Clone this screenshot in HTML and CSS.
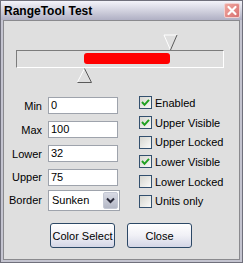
FILE: index.html
```html
<!DOCTYPE html>
<html>
<head>
<meta charset="utf-8">
<link rel="stylesheet" href="styles.css">
</head>
<body>
<div class="window">
  <div class="titlebar">
    <span class="title">RangeTool Test</span>
    <span class="close-x">
      <svg width="16" height="15" viewBox="0 0 16 15"><path d="M4.5 4 L11.5 11 M11.5 4 L4.5 11" stroke="#fff" stroke-width="2.2" stroke-linecap="round"/></svg>
    </span>
  </div>
  <div class="client">
    <div class="slider">
      <div class="track">
        <div class="range" style="left:67px;width:86px"></div>
        <svg class="thumb thumb-upper" width="15" height="17" viewBox="0 0 15 17">
          <polyline points="14,1 1,1 7.5,16" fill="none" stroke="#ffffff" stroke-width="1"/>
          <polyline points="14,1 7.5,16" fill="none" stroke="#5a5a5a" stroke-width="1"/>
        </svg>
        <svg class="thumb thumb-lower" width="15" height="15" viewBox="0 0 15 15">
          <polyline points="7.5,0.5 0.5,14" fill="none" stroke="#ffffff" stroke-width="1"/>
          <polyline points="7.5,0.5 14.5,14.5 0.5,14.5" fill="none" stroke="#5a5a5a" stroke-width="1"/>
        </svg>
      </div>
    </div>
    <div class="form">
      <div class="fields">
        <label class="lbl">Min</label><div class="input">0</div>
        <label class="lbl">Max</label><div class="input">100</div>
        <label class="lbl">Lower</label><div class="input">32</div>
        <label class="lbl">Upper</label><div class="input">75</div>
        <label class="lbl lbl-sel">Border</label>
        <div class="select">
          <span class="sel-val">Sunken</span>
          <span class="sel-drop"><svg width="9" height="7" viewBox="0 0 9 7"><path d="M1 1.5 L4.5 5 L8 1.5" fill="none" stroke="#2a2a3a" stroke-width="2"/></svg></span>
        </div>
      </div>
      <div class="checks">
        <div class="chk"><span class="box on"><svg width="11" height="11" viewBox="0 0 11 11"><path d="M2 5 L4.5 7.8 L9 2.8" fill="none" stroke="#21a121" stroke-width="2"/></svg></span>Enabled</div>
        <div class="chk"><span class="box on"><svg width="11" height="11" viewBox="0 0 11 11"><path d="M2 5 L4.5 7.8 L9 2.8" fill="none" stroke="#21a121" stroke-width="2"/></svg></span>Upper Visible</div>
        <div class="chk"><span class="box"></span>Upper Locked</div>
        <div class="chk"><span class="box on"><svg width="11" height="11" viewBox="0 0 11 11"><path d="M2 5 L4.5 7.8 L9 2.8" fill="none" stroke="#21a121" stroke-width="2"/></svg></span>Lower Visible</div>
        <div class="chk"><span class="box"></span>Lower Locked</div>
        <div class="chk"><span class="box"></span>Units only</div>
      </div>
    </div>
    <div class="buttons">
      <button class="btn">Color Select</button>
      <button class="btn">Close</button>
    </div>
  </div>
</div>
</body>
</html>
```

FILE: styles.css
```css
html, body {
  margin: 0;
  padding: 0;
  background: #ffffff;
}
body {
  font-family: "Liberation Sans", Arial, sans-serif;
  font-size: 11px;
  color: #000;
}
.window {
  width: 243px;
  height: 263px;
  box-sizing: border-box;
  border: 1px solid #70707c;
  background: #c4c4d0;
  display: flex;
  flex-direction: column;
}
.titlebar {
  height: 19px;
  flex: none;
  display: flex;
  align-items: center;
  padding-left: 3px;
  background: linear-gradient(#f4f4fa 0%, #d6d6e2 45%, #b0b0c4 100%);
}
.title {
  font-weight: bold;
  font-size: 12px;
}
.close-x {
  margin-left: auto;
  margin-right: 2px;
  width: 16px;
  height: 15px;
  box-sizing: border-box;
  border: 1px solid #f2d0d0;
  border-radius: 2px;
  background: linear-gradient(135deg, #f0a8a0, #d87070);
  display: flex;
}
.close-x svg { margin: -1px; }
.client {
  flex: 1;
  margin: 0 2px 2px 2px;
  border: 1px solid #8a8a8e;
  background: #dfdfdf;
  display: flex;
  flex-direction: column;
}
.slider {
  padding: 29px 15px 0 12px;
  height: 43px;
  flex: none;
}
.track {
  position: relative;
  height: 18px;
  box-sizing: border-box;
  border-top: 1px solid #7c7c7c;
  border-left: 1px solid #7c7c7c;
  border-bottom: 1px solid #ffffff;
  border-right: 1px solid #ffffff;
}
.range {
  position: absolute;
  top: 2px;
  height: 11px;
  background: #ff0000;
  border-radius: 3px;
}
.thumb {
  position: absolute;
}
.thumb-upper {
  left: 146px;
  top: -17px;
}
.thumb-lower {
  left: 60px;
  top: 17px;
}
.form {
  display: flex;
}
.fields {
  display: grid;
  grid-template-columns: 38px 70px;
  column-gap: 6px;
  row-gap: 6px;
  align-items: center;
  padding-top: 4px;
}
.lbl {
  text-align: right;
}
.input {
  height: 17px;
  box-sizing: border-box;
  border: 1px solid #9ea3ac;
  background: #fff;
  padding-left: 2px;
  line-height: 15px;
}
.select {
  width: 72px;
  height: 21px;
  box-sizing: border-box;
  border: 1px solid #9ea3ac;
  background: #fff;
  display: flex;
  align-items: center;
  margin-top: -3px;
}
.lbl-sel { margin-top: -3px; }
.sel-val {
  flex: 1;
  padding-left: 3px;
}
.sel-drop {
  width: 15px;
  height: 17px;
  margin-right: 1px;
  box-sizing: border-box;
  border: 1px solid #c4c8d4;
  border-radius: 2px;
  background: linear-gradient(#d8dae4, #b4b8c6);
  display: flex;
  align-items: center;
  justify-content: center;
}
.checks {
  margin-left: 21px;
  display: flex;
  flex-direction: column;
}
.chk {
  height: 19.7px;
  display: flex;
  align-items: center;
  gap: 3px;
}
.box {
  width: 13px;
  height: 13px;
  box-sizing: border-box;
  border: 1px solid #33506e;
  background: linear-gradient(135deg, #d6d6d0, #fafaf8);
  display: flex;
}
.buttons {
  display: flex;
  justify-content: center;
  gap: 12px;
  margin-top: 12px;
  padding-right: 1px;
}
.btn {
  width: 65px;
  height: 25px;
  box-sizing: border-box;
  border: 1px solid #2c4866;
  border-radius: 3px;
  background: linear-gradient(#ffffff 0%, #f0f0f6 50%, #d4d6e6 100%);
  font-family: "Liberation Sans", Arial, sans-serif;
  font-size: 11px;
  color: #000;
  padding: 0;
}
```
